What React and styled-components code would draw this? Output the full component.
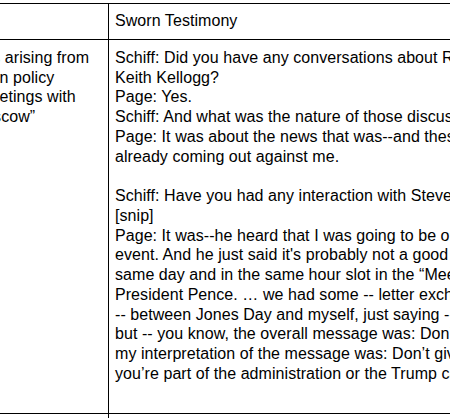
import React from 'react'
import styled, { createGlobalStyle } from 'styled-components'

//Data
const issueLines = ['Russians arising from', 'his foreign policy', 'of his meetings with', 'from Moscow\u201d']

const testimony = [
	[
		'Schiff: Did you have any conversations about Russia with',
		'Keith Kellogg?',
		'Page: Yes.',
		'Schiff: And what was the nature of those discussions?',
		'Page: It was about the news that was--and these articles that were',
		'already coming out against me.'
	],
	[
		'Schiff: Have you had any interaction with Steve Bannon?',
		'[snip]',
		'Page: It was--he heard that I was going to be on television for an',
		"event. And he just said it's probably not a good idea to do it on the",
		'same day and in the same hour slot in the \u201cMeet the Press\u201d with Vice',
		'President Pence. \u2026 we had some -- letter exchanges about it, at least',
		'-- between Jones Day and myself, just saying -- I\u2019m not going to say',
		'but -- you know, the overall message was: Don\u2019t go on, and --',
		'my interpretation of the message was: Don\u2019t give the impression that',
		'you\u2019re part of the administration or the Trump campaign.',
		''
	]
]

const App = () => {
	//Template
	return (
		<Page>
			<GlobalStyle />
			<Table>
				<Cell left />
				<Cell>Sworn Testimony</Cell>
				<Cell left body>
					{issueLines.map((line, i) => (
						<Line key={i}>{line}</Line>
					))}
				</Cell>
				<Cell body>
					{testimony.map((para, i) => (
						<Para key={i}>
							{para.map((line, j) => (
								<Line key={j}>{line || '\u00a0'}</Line>
							))}
						</Para>
					))}
				</Cell>
				<Cell left />
				<Cell />
			</Table>
		</Page>
	)
}

//Style
const GlobalStyle = createGlobalStyle`
	html, body {
		margin: 0;
		padding: 0;
		background: #fff;
	}
	body {
		font-family: 'Liberation Sans', Arial, sans-serif;
		color: #000;
		overflow: hidden;
	}
`

const Page = styled.div`
	width: 450px;
	height: 418px;
	overflow: hidden;
	padding-top: 3px;
	box-sizing: border-box;
`

const Table = styled.div`
	display: grid;
	grid-template-columns: 184px 700px;
	margin-left: -75px;
	border-top: 1px solid #000;
	font-size: 16px;
	line-height: 19.75px;
	letter-spacing: 0.06px;
`

const Cell = styled.div`
	box-sizing: border-box;
	padding: 7px 7px 8px;
	padding-top: ${(props) => (props.body ? '8px' : '7px')};
	padding-bottom: ${(props) => (props.body ? '10px' : '8px')};
	border-right: 1px solid #000;
	border-bottom: 1px solid #000;
	border-left: ${(props) => (props.left ? '1px solid #000' : 'none')};
	padding-left: ${(props) => (props.left ? '8px' : '6px')};
	min-height: 35px;
	overflow: hidden;
`

const Para = styled.div`
	& + & {
		margin-top: 19.75px;
	}
`

const Line = styled.div`
	white-space: nowrap;
`

export default App
